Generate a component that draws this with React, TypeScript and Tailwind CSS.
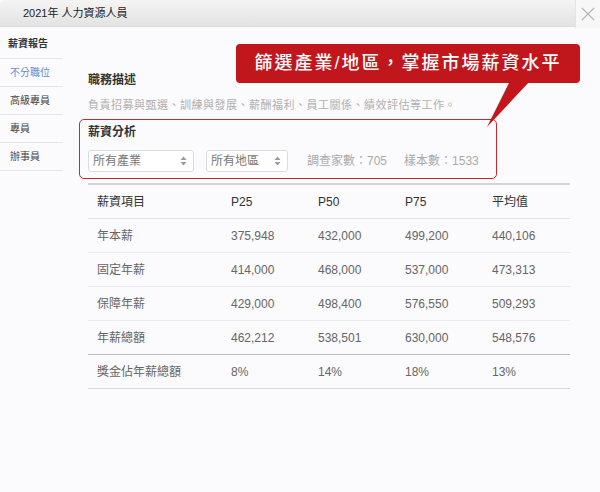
import React from 'react';

const font = { fontFamily: '"Liberation Sans", "Noto Sans CJK TC", sans-serif' };

const sideItems = [
  { label: '不分職位', active: true },
  { label: '高級專員', active: false },
  { label: '專員', active: false },
  { label: '辦事員', active: false },
];

const rows = [
  ['年本薪', '375,948', '432,000', '499,200', '440,106'],
  ['固定年薪', '414,000', '468,000', '537,000', '473,313'],
  ['保障年薪', '429,000', '498,400', '576,550', '509,293'],
  ['年薪總額', '462,212', '538,501', '630,000', '548,576'],
];

const Caret = () => (
  <svg width="7" height="10" viewBox="0 0 7 10" className="text-[#9a9a9a]">
    <path d="M3.5 0.5 L6.5 4 H0.5 Z M3.5 9.5 L6.5 6 H0.5 Z" fill="currentColor" />
  </svg>
);

const Select = ({ label, width }: { label: string; width: string }) => (
  <div className={`${width} h-[22px] flex items-center justify-between px-[4px] pr-[6px] bg-white border border-[#dcdcdc] rounded-[3px] text-[12px] text-[#777]`}>
    <span>{label}</span>
    <Caret />
  </div>
);

export default function App() {
  return (
    <div className="relative w-[600px] h-[492px] bg-[#fbfafc] overflow-hidden text-[#333]" style={font}>
      {/* top bar */}
      <div className="flex h-[28px]">
        <div className="w-[575px] h-[27px] bg-gradient-to-b from-[#f4f4f4] to-[#e3e3e3] border-b border-[#dcdcdc] rounded-tl-[6px] flex items-center pl-[23px] text-[11px] text-[#222]">
          2021年 人力資源人員
        </div>
        <div className="flex-1 flex items-center justify-center border-l border-[#e4e4e4] bg-[#f7f7f7]">
          <svg width="14" height="14" viewBox="0 0 14 14">
            <path d="M1 1 L13 13 M13 1 L1 13" stroke="#b5b5b5" strokeWidth="1.2" />
          </svg>
        </div>
      </div>

      <div className="flex">
        {/* sidebar */}
        <div className="w-[63px] shrink-0 pt-[8px]">
          <div className="h-[23px] pl-[8px] text-[10px] font-bold text-[#333] border-b border-[#e6e6e6]">薪資報告</div>
          {sideItems.map((it) => (
            <div
              key={it.label}
              className={`h-[28px] flex items-center pl-[10px] text-[10px] border-b border-[#e6e6e6] ${it.active ? 'text-[#5b8fd0]' : 'text-[#444]'}`}
            >
              {it.label}
            </div>
          ))}
        </div>

        {/* main */}
        <div className="flex-1 pl-[16px] pt-[44px]">
          <div className="pl-[9px] text-[12px] font-bold text-[#333] leading-[16px]">職務描述</div>
          <div className="pl-[9px] mt-[10px] text-[11px] text-[#b0b0b0] tracking-[0.5px] leading-[14px]">
            負責招募與甄選、訓練與發展、薪酬福利、員工關係、績效評估等工作。
          </div>

          <div className="mt-[7px] w-[418px] h-[60px] border-[1.5px] border-[#c62a2f] rounded-[5px] pl-[8px] pt-[4px]">
            <div className="text-[12px] font-bold text-[#333] leading-[16px]">薪資分析</div>
            <div className="mt-[10px] flex items-center">
              <Select label="所有產業" width="w-[106px]" />
              <div className="w-[12px]" />
              <Select label="所有地區" width="w-[82px]" />
              <span className="ml-[19px] text-[12px] text-[#aaa]">調查家數：705</span>
              <span className="ml-[17px] text-[12px] text-[#aaa]">樣本數：1533</span>
            </div>
          </div>

          {/* table */}
          <div className="mt-[4px] ml-[9px] w-[482px] border-t-2 border-[#d4d4d4] text-[12px]">
            <div className="grid grid-cols-[134px_87px_87px_87px_87px] h-[34px] items-center border-b border-[#e2e2e2] text-[#333]">
              <div className="pl-[9px]">薪資項目</div>
              <div className="pl-[9px]">P25</div>
              <div className="pl-[9px]">P50</div>
              <div className="pl-[9px]">P75</div>
              <div className="pl-[9px]">平均值</div>
            </div>
            {rows.map((r, i) => (
              <div
                key={r[0]}
                className={`grid grid-cols-[134px_87px_87px_87px_87px] h-[34px] items-center border-b ${i === rows.length - 1 ? 'border-[#bdbdbd]' : 'border-[#ececec]'} text-[#666]`}
              >
                {r.map((c) => (
                  <div key={c} className="pl-[9px]">{c}</div>
                ))}
              </div>
            ))}
            <div className="grid grid-cols-[134px_87px_87px_87px_87px] h-[34px] items-center border-b border-[#d8d8d8] text-[#666]">
              <div className="pl-[9px]">獎金佔年薪總額</div>
              <div className="pl-[9px]">8%</div>
              <div className="pl-[9px]">14%</div>
              <div className="pl-[9px]">18%</div>
              <div className="pl-[9px]">13%</div>
            </div>
          </div>
        </div>
      </div>

      {/* callout */}
      <div className="absolute left-[236px] top-[44px] w-[344px] h-[39px] bg-[#c2161d] rounded-[4px] flex items-center justify-center text-white text-[18px] font-medium tracking-[2px]">
        篩選產業/地區，掌握市場薪資水平
      </div>
      <svg className="absolute left-[484px] top-[81px]" width="50" height="48" viewBox="0 0 50 48">
        <polygon points="26,0 46,0 3,46" fill="#c2161d" />
      </svg>
    </div>
  );
}
